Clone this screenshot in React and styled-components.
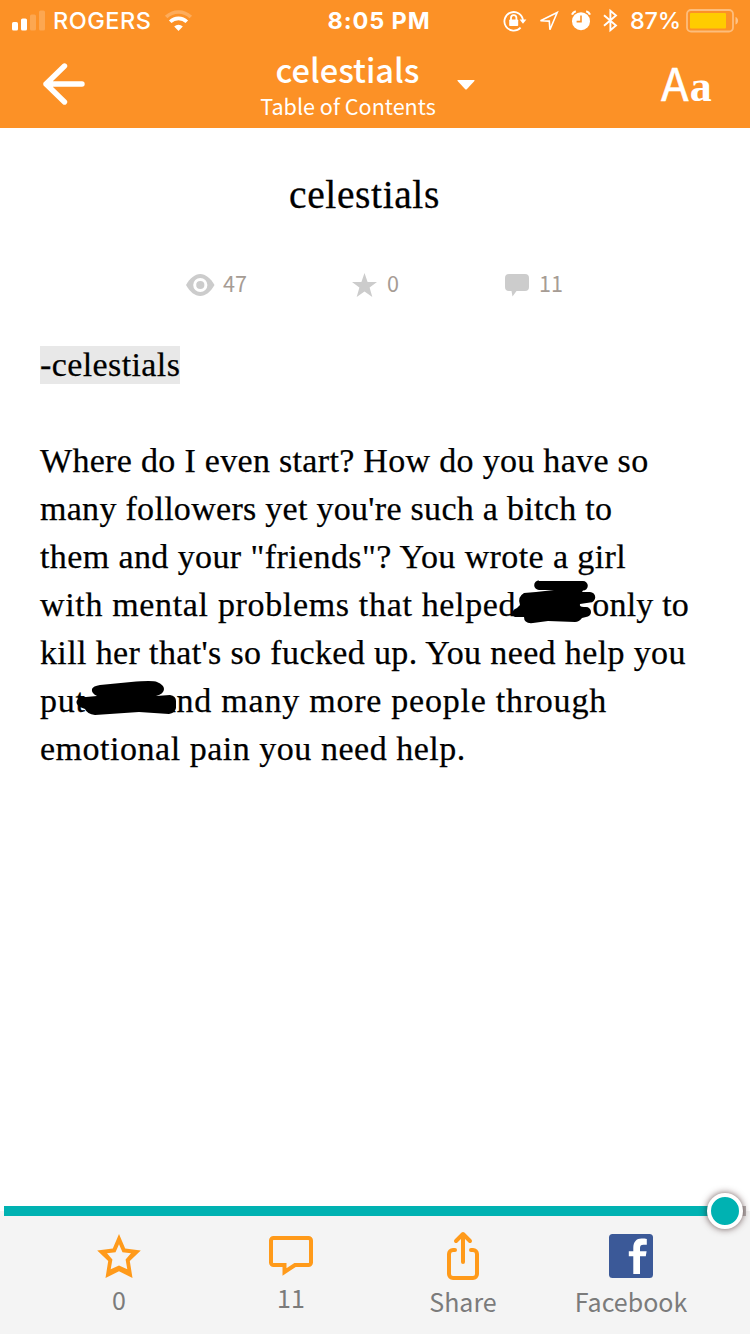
import React from "react"
import styled, { createGlobalStyle } from "styled-components"

const GlobalStyle = createGlobalStyle`
  body {
    margin: 0;
    background: #ffffff;
  }
`

const sans = `"Noto Sans CJK SC", "Noto Sans", sans-serif`
const serif = `"Liberation Serif", serif`

const Screen = styled.div`
  display: flex;
  flex-direction: column;
  width: 750px;
  height: 1334px;
  overflow: hidden;
  background: #ffffff;
`

// Header
const Header = styled.header`
  height: 128px;
  background: #fc9126;
  color: #ffffff;
`

const StatusBar = styled.div`
  display: grid;
  grid-template-columns: 315px 128px 1fr;
  align-items: center;
  height: 40px;
  font-family: Inter, sans-serif;
  font-size: 23.5px;
  line-height: 40px;
`

const StatusLeft = styled.div`
  display: flex;
  align-items: center;
  padding-left: 12px;
`

const Carrier = styled.span`
  margin: 0 14px 0 7px;
  padding-top: 1px;
  font-weight: 500;
  letter-spacing: 0.5px;
`

const Clock = styled.span`
  padding-top: 1px;
  text-align: center;
  font-weight: 700;
  letter-spacing: 0.9px;
`

const StatusRight = styled.div`
  display: flex;
  align-items: center;
  padding-left: 60px;
`

const Percent = styled.span`
  margin: 0 5px 0 12px;
  padding-top: 1px;
  font-weight: 500;
  letter-spacing: -0.2px;
`

const Icon = styled.svg`
  display: block;
  flex: none;
  overflow: visible;
`

const StatusIcons = styled.div`
  display: flex;
  align-items: center;
  gap: 12px;
`

const NavBar = styled.nav`
  display: grid;
  grid-template-columns: 261px 174px 226px 1fr;
  height: 88px;
`

const BackButton = styled.div`
  padding: 22px 0 0 42px;
`

const TitleBlock = styled.div`
  display: flex;
  flex-direction: column;
  align-items: center;
  font-family: ${sans};
  white-space: nowrap;
`

const NavTitle = styled.div`
  margin-top: 7px;
  padding-right: 1px;
  font-size: 32.6px;
  line-height: 43px;
  font-weight: 500;
`

const NavSubtitle = styled.div`
  font-size: 21.6px;
  line-height: 32px;
`

const Caret = styled.div`
  padding: 40px 0 0 22px;
`

const FontButton = styled.div`
  display: flex;
  align-items: baseline;
  font-family: ${sans};
  font-size: 45.5px;
  line-height: 83px;
  -webkit-text-stroke: 0.5px #ffffff;
`

const SerifLetter = styled.span`
  margin-left: 1px;
  font-family: ${serif};
  font-size: 44px;
  font-weight: 700;
  -webkit-text-stroke: 0;
`

// Story
const Story = styled.main`
  flex: 1;
  color: #000000;
  font-family: ${serif};
`

const StoryTitle = styled.h1`
  margin: 43px 0 0;
  padding-right: 21px;
  font-size: 39.5px;
  line-height: 48px;
  font-weight: 400;
  text-align: center;
  letter-spacing: 0.6px;
  -webkit-text-stroke: 0.3px #000000;
`

const Stats = styled.div`
  display: grid;
  grid-template-columns: 166px 153px 1fr;
  margin-top: 46px;
  padding-left: 186px;
  height: 40px;
`

const Stat = styled.div`
  display: flex;
  align-items: center;
  gap: ${({ $gap }) => $gap}px;
`

const Count = styled.span`
  margin-top: -4px;
  color: #a69c94;
  font-family: ${sans};
  font-size: 21.6px;
  line-height: 40px;
`

const StoryText = styled.div`
  margin: 36px 0 0 40px;
  font-size: 34px;
  line-height: 48px;
  -webkit-text-stroke: 0.25px #000000;
`

const Line = styled.div`
  height: 48px;
  white-space: nowrap;
  letter-spacing: ${({ $spacing }) => $spacing || 0}px;
`

const Words = styled.span`
  letter-spacing: ${({ $spacing }) => $spacing}px;
`

const Mention = styled.span`
  padding-bottom: 1px;
  background: #e8e8e8;
`

const Gap = styled.span`
  display: inline-block;
  position: relative;
  width: ${({ $width }) => $width}px;
`

// Marker strokes run over the letters on both sides of the gap
const Marker = styled.svg`
  position: absolute;
  left: ${({ $left }) => $left}px;
  bottom: ${({ $bottom }) => $bottom}px;
  overflow: visible;
`

// Footer
const Footer = styled.footer`
  height: 123px;
  background: #f4f4f4;
  font-family: ${sans};
`

const Track = styled.div`
  position: relative;
  top: -5px;
  height: 10px;
  margin: 0 4px;
  background: linear-gradient(to right, #00b2b2 720px, #b9b4b4 720px);
`

const Thumb = styled.div`
  position: absolute;
  top: -13px;
  right: 3px;
  box-sizing: border-box;
  width: 36px;
  height: 36px;
  border: 4px solid #ffffff;
  border-radius: 50%;
  background: #00b2b2;
  box-shadow: 0 0 7px rgba(50, 20, 20, 0.7);
`

const Actions = styled.div`
  display: grid;
  grid-template-columns: 172px 172px 172px 164px;
  padding: 11px 0 0 33px;
`

const Action = styled.div`
  display: flex;
  flex-direction: column;
  align-items: center;
`

const ActionIcon = styled.div`
  display: flex;
  align-items: center;
  height: 48px;
`

const ActionLabel = styled.span`
  margin-top: ${({ $top }) => $top}px;
  color: #7b7b7b;
  font-size: 25px;
  line-height: 40px;
`

const SignalIcon = () => (
  <Icon width="34" height="22" viewBox="0 0 34 22" fill="#fff">
    <rect x="0" y="12" width="6" height="8.5" rx="1.6" />
    <rect x="9" y="8.5" width="6" height="12" rx="1.6" />
    <rect x="18" y="4.5" width="6" height="16" rx="1.6" opacity="0.2" />
    <rect x="27" y="0.5" width="6" height="20" rx="1.6" opacity="0.2" />
  </Icon>
)

const WifiIcon = () => (
  <Icon width="27" height="20" viewBox="0 0 27 20" fill="none" stroke="#fff" strokeWidth="3.6">
    <path d="M1.2 6a17.5 17.5 0 0 1 24.6 0" opacity="0.25" />
    <path d="M5.2 10.8a11.8 11.8 0 0 1 16.6 0" />
    <path d="M13.5 20l-4.3-4.4a6.2 6.2 0 0 1 8.6 0z" fill="#fff" stroke="none" />
  </Icon>
)

const LockIcon = () => (
  <Icon width="24" height="22" viewBox="0 0 24 22" fill="none" stroke="#fff" strokeWidth="1.8">
    <path d="M17.6 17.6A9.3 9.3 0 1 1 20 10.5" />
    <path d="M16.6 9.5h6.8L20 13.8z" fill="#fff" stroke="none" />
    <rect x="6.2" y="9.5" width="9" height="6.6" rx="0.8" fill="#fff" stroke="none" />
    <path d="M8 10V7.8a2.7 2.7 0 0 1 5.4 0V10" />
  </Icon>
)

const LocationIcon = () => (
  <Icon width="20" height="20" viewBox="0 0 20 20" fill="none" stroke="#fff" strokeWidth="1.6">
    <path d="M18.2 1.5L1.5 9.8l8.8.3.6 8.6z" />
  </Icon>
)

const AlarmIcon = () => (
  <Icon width="20" height="21" viewBox="0 0 20 21">
    <circle cx="10" cy="11.2" r="9" fill="#fff" />
    <path d="M1 4.6A6 6 0 0 1 4.8 1.2M19 4.6a6 6 0 0 0-3.8-3.400" fill="none" stroke="#fff" strokeWidth="2.2" />
    <path d="M10 5.6v6H5.6" fill="none" stroke="#fc9126" strokeWidth="1.6" />
  </Icon>
)

const BluetoothIcon = () => (
  <Icon width="15" height="23" viewBox="0 0 15 23" fill="none" stroke="#fff" strokeWidth="1.9">
    <path d="M1 6.2l12 10.3-5.6 4.8V1.7L13 6.5 1 16.8" />
  </Icon>
)

const BatteryIcon = () => (
  <Icon width="54" height="24" viewBox="0 0 54 24">
    <rect x="1" y="1" width="46" height="21.5" rx="4" fill="none" stroke="#fff" strokeOpacity="0.4" strokeWidth="1.8" />
    <rect x="4" y="4" width="36" height="15.5" rx="1" fill="#ffcc00" />
    <path d="M49.5 8c3.4 1.2 3.4 6.4 0 7.6z" fill="#fff" opacity="0.45" />
  </Icon>
)

const BackIcon = () => (
  <Icon width="44" height="44" viewBox="0 0 44 44" fill="none" stroke="#fff" strokeWidth="5.4" strokeLinecap="round" strokeLinejoin="round">
    <path d="M22.5 4L4 22l18.5 18M4 22h36" />
  </Icon>
)

const EyeIcon = () => (
  <Icon width="29" height="22" viewBox="0 0 29 22">
    <path d="M0 11C4 4 9 0 14.2 0S24.5 4 28.5 11C24.5 18 19.5 22 14.2 22S4 18 0 11z" fill="#cccccc" />
    <circle cx="14.3" cy="11" r="5.6" fill="#cccccc" stroke="#fff" strokeWidth="3" />
  </Icon>
)

const StarIcon = () => (
  <Icon width="25" height="24" viewBox="0 0 25 24" fill="#cccccc">
    <path d="M12.5 0l3.1 8.9h9.4l-7.4 5.7 2.7 9.4-7.8-5.6L4.7 24l2.7-9.4L0 8.9h9.4z" />
  </Icon>
)

const BubbleIcon = () => (
  <Icon width="24" height="22" viewBox="0 0 24 22" fill="#cccccc">
    <path d="M4 0h16a4 4 0 0 1 4 4v9a4 4 0 0 1-4 4h-8.5L7.5 22.5 6.5 17H4a4 4 0 0 1-4-4V4a4 4 0 0 1 4-4z" />
  </Icon>
)

const VoteIcon = () => (
  <Icon width="44" height="44" viewBox="0 0 44 44" fill="#ff9a1a" fillRule="evenodd">
    <path d="M22 0l6.2 14.5 15.6 2-11 10.6 2.7 16.9L22 37.2 8.5 44l2.7-16.9-11-10.6 15.6-2zM22 10.300l-3.500 8-8.500 1 5.400 6.300-1.700 9.700L22 31.500l8.300 3.800-1.700-9.700 5.400-6.300-8.500-1z" />
  </Icon>
)

const CommentIcon = () => (
  <Icon width="44" height="40" viewBox="0 0 44 40" fill="none" stroke="#ff9a1a" strokeWidth="4">
    <path d="M4.5 2h35A2.5 2.5 0 0 1 42 4.5v22a2.5 2.5 0 0 1-2.5 2.5H26l-10.5 7V29h-11A2.5 2.5 0 0 1 2 26.5v-22A2.5 2.5 0 0 1 4.5 2z" />
  </Icon>
)

const ShareIcon = () => (
  <Icon width="32" height="48" viewBox="0 0 32 48" fill="none" stroke="#ff9a1a" strokeWidth="4" strokeLinecap="round" strokeLinejoin="round">
    <path d="M16 3v27M9 9l7-7 7 7" />
    <path d="M8 18H6a4 4 0 0 0-4 4v20a4 4 0 0 0 4 4h20a4 4 0 0 0 4-4V22a4 4 0 0 0-4-4h-2" />
  </Icon>
)

const FacebookIcon = () => (
  <Icon width="44" height="44" viewBox="0 0 44 44">
    <rect width="44" height="44" rx="3.5" fill="#3b5998" />
    <path d="M24.3 40V22.3h-4.5v-5h4.5v-3.5c0-6 3.2-9.3 8.2-9.3 2.2 0 3.9.1 5.3.4v5.8h-3.3c-2.7 0-3.5 1.2-3.5 3.4v3.2h6.6l-.8 5H31V40z" fill="#fff" />
  </Icon>
)

const App = () => {
  return (
    <Screen>
      <GlobalStyle />
      <Header>
        <StatusBar>
          <StatusLeft>
            <SignalIcon />
            <Carrier>ROGERS</Carrier>
            <WifiIcon />
          </StatusLeft>
          <Clock>8:05 PM</Clock>
          <StatusRight>
            <StatusIcons>
              <LockIcon />
              <LocationIcon />
              <AlarmIcon />
              <BluetoothIcon />
            </StatusIcons>
            <Percent>87%</Percent>
            <BatteryIcon />
          </StatusRight>
        </StatusBar>
        <NavBar>
          <BackButton>
            <BackIcon />
          </BackButton>
          <TitleBlock>
            <NavTitle>celestials</NavTitle>
            <NavSubtitle>Table of Contents</NavSubtitle>
          </TitleBlock>
          <Caret>
            <Icon width="18" height="10" viewBox="0 0 18 10">
              <path d="M1 0h16q1 0 .4 1L10 9q-1 1-2 0L.6 1Q0 0 1 0z" fill="#fff" />
            </Icon>
          </Caret>
          <FontButton>
            A<SerifLetter>a</SerifLetter>
          </FontButton>
        </NavBar>
      </Header>

      <Story>
        <StoryTitle>celestials</StoryTitle>
        <Stats>
          <Stat $gap={8}>
            <EyeIcon />
            <Count>47</Count>
          </Stat>
          <Stat $gap={10}>
            <StarIcon />
            <Count>0</Count>
          </Stat>
          <Stat $gap={10}>
            <BubbleIcon />
            <Count>11</Count>
          </Stat>
        </Stats>
        <StoryText>
          <Line $spacing={0.4}>
            <Mention>-celestials</Mention>
          </Line>
          <Line />
          <Line $spacing={0.31}>Where do I even start? How do you have so</Line>
          <Line $spacing={0.29}>many followers yet you're such a bitch to</Line>
          <Line $spacing={0.4}>them and your "friends"? You wrote a girl</Line>
          <Line $spacing={0.66}>
            with mental problems that helped
            <Gap $width={76}>
              <Marker $left={-4} $bottom={-8} width="83" height="43" viewBox="0 0 83 43">
                <path d="M27 0H71a4.8 4.8 0 0 1 0 9.6L70 11H78a5 5 0 0 1 0 10.5L68 23q-1 3 4 3h2a4.7 4.7 0 0 1 0 10l-4 1q-3 4-7 4L36 40l-15 2q-9 1-9-6H3q-4-2-2-6 1-2 4-3l3-3q-3-8 4-12l12-1 18-2H27a4.8 4.8 0 0 1 0-9.6z" />
              </Marker>
            </Gap>
            <Words $spacing={0.2}>only to</Words>
          </Line>
          <Line $spacing={0.37}>kill her that's so fucked up. You need help you</Line>
          <Line $spacing={0.76}>
            put
            <Gap $width={75}>
              <Marker $left={-10} $bottom={-4} width="100" height="35" viewBox="0 0 100 35">
                <path d="M24 4L55 1q22-2 26 0 7 3 7 7 0 5-8 7l14-1q6 1 6 6v7q-1 5-7 6l-30-2-44 3q-8-1-10-6L4 26q-6-4-2-8 2-3 8-2l11-1q-6-3-5-7 1-3 8-4z" />
              </Marker>
            </Gap>
            and many more people through
          </Line>
          <Line $spacing={0.52}>emotional pain you need help.</Line>
        </StoryText>
      </Story>

      <Footer>
        <Track>
          <Thumb />
        </Track>
        <Actions>
          <Action>
            <ActionIcon>
              <VoteIcon />
            </ActionIcon>
            <ActionLabel $top={-1}>0</ActionLabel>
          </Action>
          <Action>
            <ActionIcon>
              <CommentIcon />
            </ActionIcon>
            <ActionLabel $top={-3}>11</ActionLabel>
          </Action>
          <Action>
            <ActionIcon>
              <ShareIcon />
            </ActionIcon>
            <ActionLabel $top={1}>Share</ActionLabel>
          </Action>
          <Action>
            <ActionIcon>
              <FacebookIcon />
            </ActionIcon>
            <ActionLabel $top={1}>Facebook</ActionLabel>
          </Action>
        </Actions>
      </Footer>
    </Screen>
  )
}

export default App
